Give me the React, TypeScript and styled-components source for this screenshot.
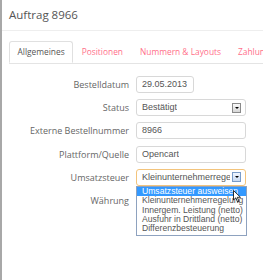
import React from "react";
import styled, { createGlobalStyle } from "styled-components";

const GlobalStyle = createGlobalStyle`
  html, body { margin: 0; padding: 0; background: #fff; }
  body { font-family: "Open Sans", "Liberation Sans", sans-serif; }
`;

const Page = styled.div`
  width: 263px;
  height: 280px;
  box-sizing: border-box;
  border-left: 2px solid #a8a8a8;
  overflow: hidden;
  background: #fff;
`;

const Header = styled.div`
  height: 31px;
  box-sizing: border-box;
  padding: 7px 0 0 7px;
  border-bottom: 1px solid #eeeeee;
  font-size: 11.5px;
  color: #555;
`;

const TabBar = styled.div`
  display: flex;
  margin: 10px 0 0 7px;
  border-bottom: 1px solid #e4e4e4;
  height: 22px;
  white-space: nowrap;
`;

const Tab = styled.div<{ $active?: boolean }>`
  font-size: 8.4px;
  line-height: 20px;
  padding: 0 7.5px;
  color: ${(p) => (p.$active ? "#555" : "#ff6f8a")};
  border: 1px solid ${(p) => (p.$active ? "#e0e0e0" : "transparent")};
  border-bottom-color: ${(p) => (p.$active ? "#fff" : "transparent")};
  border-radius: 3px 3px 0 0;
  background: #fff;
  height: 22px;
  box-sizing: border-box;
  flex-shrink: 0;
`;

const Form = styled.div`
  display: grid;
  grid-template-columns: 127px 110px;
  column-gap: 7px;
  row-gap: 6.2px;
  margin-top: 12px;
  align-items: center;
`;

const Label = styled.div`
  font-size: 9px;
  color: #666;
  text-align: right;
  line-height: 17px;
  white-space: nowrap;
`;

const Field = styled.div<{ $width?: number; $focus?: boolean }>`
  position: relative;
  width: ${(p) => (p.$width ? `${p.$width}px` : "110px")};
  height: 17px;
  box-sizing: border-box;
  border: 1px solid ${(p) => (p.$focus ? "#f3c47c" : "#d8d8d8")};
  border-radius: 3px;
  font-family: "Liberation Sans", Arial, sans-serif;
  font-size: 9px;
  color: #555;
  line-height: 15px;
  padding: 0 4px 0 5px;
  display: flex;
  align-items: center;
  justify-content: space-between;
  white-space: nowrap;
  background: #fff;
`;

const FieldText = styled.span`
  overflow: hidden;
  text-overflow: clip;
`;

const DropButton = styled.span<{ $hot?: boolean }>`
  flex-shrink: 0;
  width: 9px;
  height: 10px;
  box-sizing: border-box;
  border: 1px solid ${(p) => (p.$hot ? "#7a9cc8" : "#8a8a8a")};
  background: ${(p) => (p.$hot ? "linear-gradient(#f0f6ff, #c8daf2)" : "linear-gradient(#fafafa, #d6d6d6)")};
  display: flex;
  align-items: center;
  justify-content: center;
  margin-left: 2px;
  &::after {
    content: "";
    border-left: 2px solid transparent;
    border-right: 2px solid transparent;
    border-top: 2px solid #000;
  }
`;

const ListBox = styled.div`
  position: absolute;
  left: -1px;
  top: 16px;
  width: 111px;
  box-sizing: border-box;
  border: 1px solid #8ea2bf;
  background: #fff;
  z-index: 5;
  padding-bottom: 1px;
`;

const Option = styled.div<{ $selected?: boolean }>`
  font-family: "Liberation Sans", Arial, sans-serif;
  font-size: 8.6px;
  line-height: 9.4px;
  height: 9.4px;
  padding: 0 0 0 5px;
  color: ${(p) => (p.$selected ? "#fff" : "#555")};
  background: ${(p) => (p.$selected ? "#3399ff" : "transparent")};
  white-space: nowrap;
  overflow: hidden;
`;

const Cursor = styled.svg`
  position: absolute;
  left: 96px;
  top: 3px;
  width: 9px;
  height: 13px;
`;

const options = [
  "Umsatzsteuer ausweisen",
  "Kleinunternehmerregelung",
  "Innergem. Leistung (netto)",
  "Ausfuhr in Drittland (netto)",
  "Differenzbesteuerung",
];

export default function App() {
  return (
    <>
      <GlobalStyle />
      <Page>
        <Header>Auftrag 8966</Header>
        <TabBar>
          <Tab $active>Allgemeines</Tab>
          <Tab>Positionen</Tab>
          <Tab>Nummern &amp; Layouts</Tab>
          <Tab>Zahlungen</Tab>
        </TabBar>
        <Form>
          <Label>Bestelldatum</Label>
          <Field $width={58}>
            <FieldText>29.05.2013</FieldText>
          </Field>
          <Label>Status</Label>
          <Field>
            <FieldText>Bestätigt</FieldText>
            <DropButton />
          </Field>
          <Label>Externe Bestellnummer</Label>
          <Field>
            <FieldText>8966</FieldText>
          </Field>
          <Label>Plattform/Quelle</Label>
          <Field>
            <FieldText>Opencart</FieldText>
          </Field>
          <Label>Umsatzsteuer</Label>
          <Field $focus>
            <FieldText>Kleinunternehmerregelung</FieldText>
            <DropButton $hot />
            <ListBox>
              {options.map((o, i) => (
                <Option key={o} $selected={i === 0}>
                  {o}
                </Option>
              ))}
              <Cursor viewBox="0 0 9 13">
                <path d="M0.5 0.5 L0.5 10 L2.8 7.8 L4.6 12 L6 11.4 L4.3 7.3 L7.5 7.3 Z" fill="#fff" stroke="#000" strokeWidth="0.8" />
              </Cursor>
            </ListBox>
          </Field>
          <Label>Währung</Label>
          <div />
        </Form>
      </Page>
    </>
  );
}
